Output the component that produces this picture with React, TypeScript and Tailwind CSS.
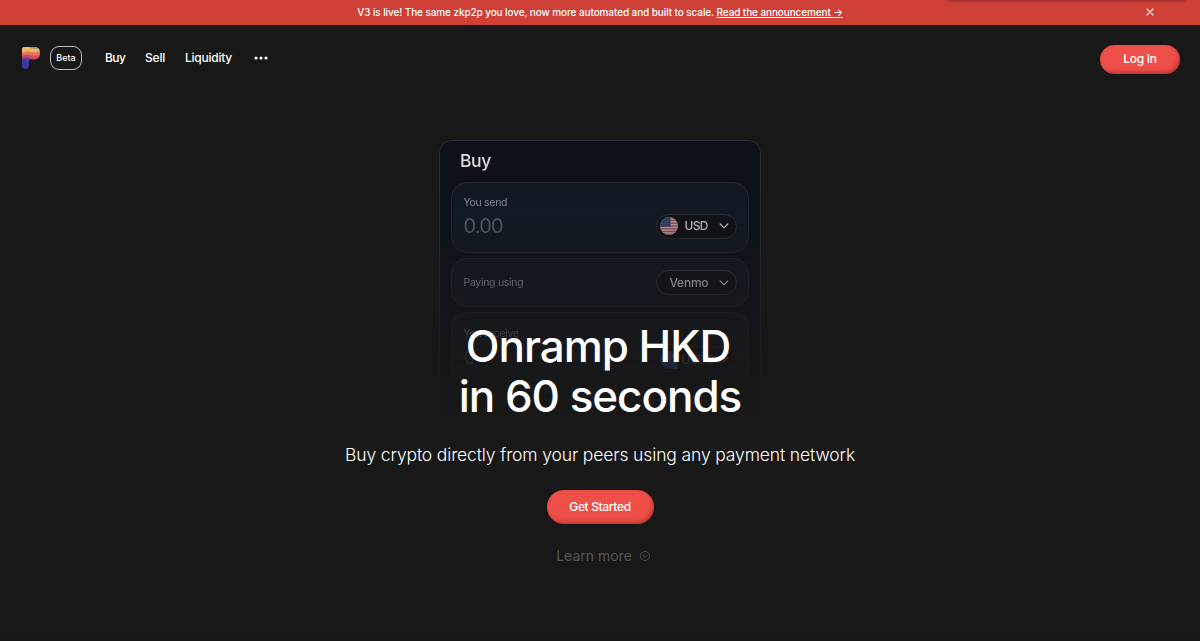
import { ReactNode } from 'react';

const navLinks = [
    { label: 'Buy', className: 'w-[20px] tracking-[-0.6px]' },
    { label: 'Sell', className: 'w-[20px] tracking-[-0.2px]' },
    { label: 'Liquidity', className: 'w-[47px] tracking-[-0.25px]' },
];

const Logo = () => (
    <svg width="18" height="22" viewBox="0 0 18 22" aria-label="zkp2p">
        <defs>
            <clipPath id="logo-shape">
                <path d="M2.5 0H12C16 0 18 2.6 18 6.2C18 10.2 15.4 12.4 11.6 12.4H9C7.7 12.4 7 13 7 14.4V18.4C7 20.6 5.5 22 3.5 22C1.4 22 0 20.6 0 18.4V2.5C0 1 1 0 2.5 0Z" />
            </clipPath>
            <linearGradient id="logo-base" x1="0" y1="0" x2="0" y2="1">
                <stop offset="0.45" stopColor="#7a3a86" />
                <stop offset="0.65" stopColor="#40379f" />
                <stop offset="1" stopColor="#3238a0" />
            </linearGradient>
            <linearGradient id="logo-red" x1="0" y1="0" x2="1" y2="0">
                <stop offset="0" stopColor="#b8465f" />
                <stop offset="1" stopColor="#e0506a" />
            </linearGradient>
        </defs>
        <g clipPath="url(#logo-shape)">
            <rect width="18" height="22" fill="url(#logo-base)" />
            <path d="M0 11.5C4 10 6 10.5 9 12C12 13 15 13 18 11V0H0Z" fill="url(#logo-red)" />
            <path d="M0 9C4 7.5 7 7.5 10 8.5C13 9.5 16 8.5 18 7V0H0Z" fill="#ea7159" />
            <path d="M0 6C4 4 7 4.5 10 5C13 6 16 5 18 3.5V0H0Z" fill="#f2b268" />
            <path d="M7 0C10 2 14 2.5 17 1.5V0Z" fill="#8da072" />
        </g>
    </svg>
);

const Chevron = () => (
    <svg width="10" height="6" viewBox="0 0 10 6" fill="none" stroke="currentColor" strokeWidth="1.2" strokeLinecap="round" strokeLinejoin="round">
        <path d="M1.2 1L5 4.8L8.8 1" />
    </svg>
);

const UsFlag = () => (
    <svg width="18" height="18" viewBox="0 0 18 18">
        <defs>
            <clipPath id="flag-circle">
                <circle cx="9" cy="9" r="9" />
            </clipPath>
        </defs>
        <g clipPath="url(#flag-circle)">
            <rect width="18" height="18" fill="#b9aaa9" />
            {[0, 1, 2, 3, 4, 5, 6].map((row) => (
                <rect key={row} y={row * 2.77} width="18" height="1.38" fill="#9b4a4d" />
            ))}
            <rect width="10.5" height="9.7" fill="#2f3f6b" />
            {[2, 4.4, 6.8].map((cy) =>
                [2.5, 5, 7.5].map((cx) => <circle key={`${cx}-${cy}`} cx={cx} cy={cy} r="0.45" fill="#8791ac" />)
            )}
        </g>
    </svg>
);

const UsdcIcon = () => (
    <svg width="18" height="18" viewBox="0 0 18 18">
        <circle cx="9" cy="9" r="9" fill="#2f6fc4" />
        <path d="M6 4A6 6 0 0 0 6 14M12 4A6 6 0 0 1 12 14" fill="none" stroke="#b9c8e0" />
        <circle cx="15" cy="15" r="3" fill="#4a80e0" />
    </svg>
);

const Panel = ({ className, children }: { className: string; children: ReactNode }) => (
    <div className={`flex justify-between rounded-2xl border border-[#22272f] bg-[#121923] px-[11.5px] ${className}`}>
        {children}
    </div>
);

const BuyCard = () => (
    <div className="h-[275px] w-[322px] rounded-t-[13px] border border-b-0 border-[#2b2d32] bg-[#0e111a] px-[11px] [mask-image:linear-gradient(to_bottom,black_0%,rgba(0,0,0,.9)_30%,rgba(0,0,0,.55)_54%,rgba(0,0,0,.22)_76%,transparent_98%)]">
        <h2 className="flex h-[41px] items-center pb-px pl-[9px] text-[17.5px] leading-none font-medium tracking-[-0.4px] text-[#dfe0e3]">Buy</h2>
        <Panel className="h-[71px] items-start">
            <div className="pt-[13px]">
                <p className="text-[10.5px] leading-[14px] tracking-[-0.3px] text-[#8e929a]">You send</p>
                <p className="mt-1 text-[20px] leading-6 tracking-[-0.8px] text-[#565a60]">0.00</p>
            </div>
            <div className="mt-[31px] flex h-[25px] w-[81px] items-center rounded-full border border-[#292c32] bg-[#101218] pb-px pl-[3px] text-[#c5c6ca]">
                <UsFlag />
                <span className="ml-[7px] w-[34px] text-[12px] font-medium tracking-[-0.7px]">USD</span>
                <Chevron />
            </div>
        </Panel>
        <Panel className="mt-[5px] h-[49px] items-center">
            <p className="text-[10.5px] tracking-[-0.3px] text-[#9a9ca2]">Paying using</p>
            <div className="flex h-[25px] w-[81px] items-center rounded-full border border-[#383a3f] bg-[#101218] pl-[13px] text-[#d0d1d4]">
                <span className="w-[49px] text-[12px] font-medium tracking-[-0.25px]">Venmo</span>
                <Chevron />
            </div>
        </Panel>
        <Panel className="mt-[5px] h-[90px] items-start">
            <div className="pt-[14px]">
                <p className="text-[10.5px] leading-[14px] tracking-[-0.25px] text-[#9a9ca2]">You receive</p>
                <p className="mt-1 text-[20px] leading-6 text-[#565a60]">0</p>
            </div>
            <div className="mt-[34px] flex h-[25px] w-[81px] items-center rounded-full border border-[#292c32] bg-[#101218] pl-[3px] text-[#9698a0]">
                <UsdcIcon />
                <span className="ml-[4px] w-[37px] text-[12px] tracking-[-0.3px]">USDC</span>
                <Chevron />
            </div>
        </Panel>
    </div>
);

const buttonShape =
    'flex items-center justify-center rounded-full bg-[#ee5049] text-[12px] font-medium text-white shadow-[inset_-2px_-3px_4px_-1px_rgba(150,40,35,.6),inset_0_0_1px_#a83630]';

export default function App() {
    return (
        <div className="h-[641px] overflow-hidden border-b-2 border-[#181517] bg-[#181818] font-[Inter,'Liberation_Sans',sans-serif] text-white">
            <div className="relative flex h-[25px] items-center justify-center bg-[#cf4037] text-[10px] font-medium">
                <div className="absolute top-[-4px] right-[14px] h-1 w-[240px] rounded-b bg-[#a6332c] shadow-[0_1px_3px_#8e2d27]" />
                <p className="pb-px whitespace-nowrap tracking-[-0.1px]">
                    V3 is live! The same zkp2p you love, now more automated and built to scale.{' '}
                    <a href="#announcement" className="underline underline-offset-1">Read the announcement →</a>
                </p>
                <button className="absolute top-2 right-[46px]" aria-label="Dismiss">
                    <svg width="8" height="8" viewBox="0 0 8 8" stroke="white" strokeWidth="1.1" strokeLinecap="round" className="block">
                        <path d="M1 1L7 7M7 1L1 7" />
                    </svg>
                </button>
            </div>

            <header className="flex h-[65px] items-center justify-between pr-5 pl-[22px]">
                <div className="flex items-center text-[12px] font-medium">
                    <Logo />
                    <span className="ml-[10px] flex h-[24px] w-[32px] items-center justify-center rounded-[9px] border border-[#bdbdbd] text-[9px]">
                        Beta
                    </span>
                    <nav className="ml-[23px] flex gap-5 whitespace-nowrap">
                        {navLinks.map((link) => (
                            <a key={link.label} href="#" className={link.className}>{link.label}</a>
                        ))}
                    </nav>
                    <svg width="14" height="4" viewBox="0 0 14 4" fill="white" className="ml-[22px]">
                        <circle cx="2" cy="2" r="1.6" />
                        <circle cx="7" cy="2" r="1.6" />
                        <circle cx="12" cy="2" r="1.6" />
                    </svg>
                </div>
                <button className={`${buttonShape} mt-[3px] h-[29px] w-20 tracking-[-0.3px]`}>Log In</button>
            </header>

            <main className="flex flex-col items-center pt-[50px]">
                <BuyCard />
                <h1 className="relative -mt-[94px] flex flex-col items-center text-[44px] leading-[50px] font-medium tracking-[-1.05px]">
                    <span className="pr-1">Onramp HKD</span>
                    <span>in 60 seconds</span>
                </h1>
                <p className="mt-[22px] text-[17.5px] leading-6 font-light tracking-[-0.13px] whitespace-nowrap">
                    Buy crypto directly from your peers using any payment network
                </p>
                <button className={`${buttonShape} mt-[23px] h-[34px] w-[107px] pb-px tracking-[-0.35px]`}>Get Started</button>
                <a href="#more" className="mt-[22px] flex items-center gap-2 pl-[6px] text-[14px] leading-5 text-[#565656]">
                    Learn more
                    <svg width="10" height="10" viewBox="0 0 10 10" fill="none" stroke="currentColor" strokeWidth="0.9">
                        <circle cx="5" cy="5" r="4.5" />
                        <path d="M3 4.2L5 6.2L7 4.2" strokeLinecap="round" strokeLinejoin="round" />
                    </svg>
                </a>
            </main>
        </div>
    );
}
